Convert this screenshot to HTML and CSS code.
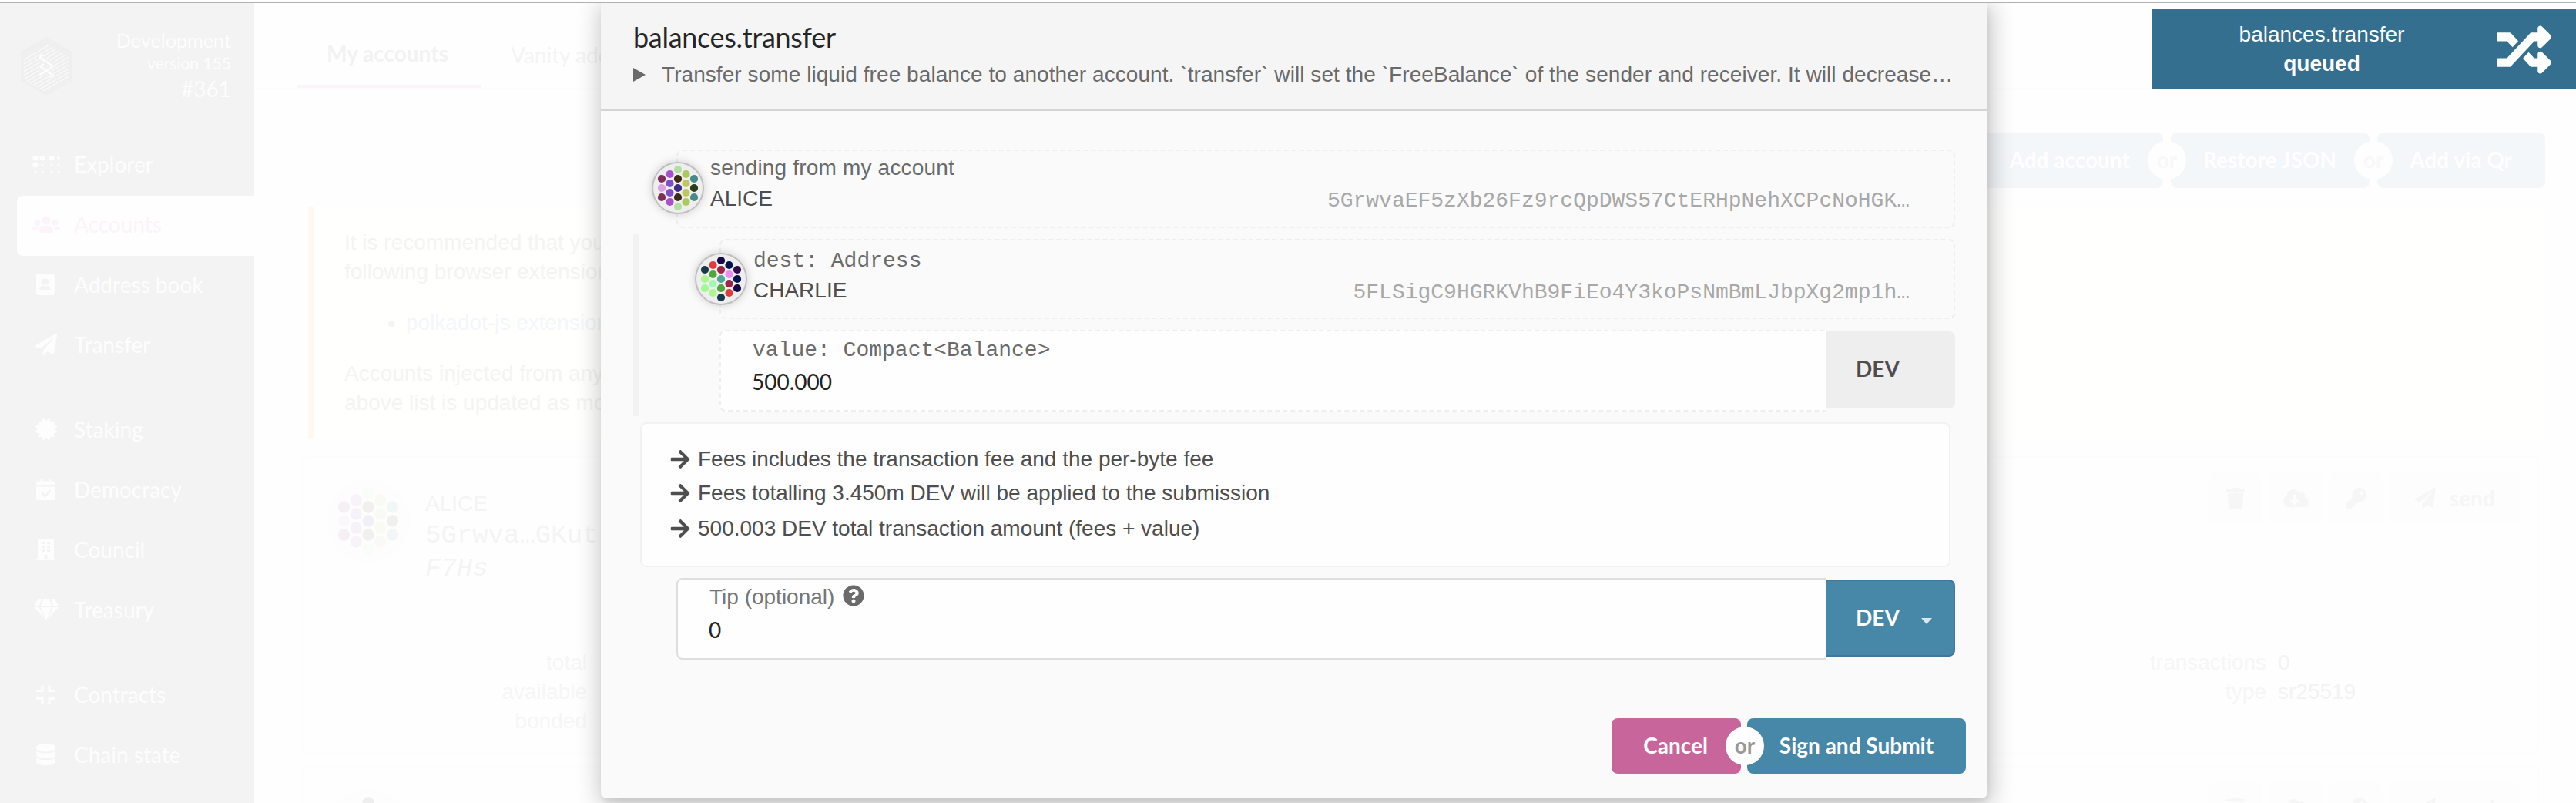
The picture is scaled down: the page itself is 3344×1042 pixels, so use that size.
FILE: index.html
```html
<!DOCTYPE html>
<html lang="en">
<head>
<meta charset="utf-8">
<title>Accounts</title>
<link rel="stylesheet" href="styles.css">
</head>
<body>
<svg class="defs" aria-hidden="true">
  <defs>
    <symbol id="plane" viewBox="0 0 512 512"><path d="M476 3.2L12.5 270.6c-18.1 10.4-15.8 35.6 2.2 43.2L121 358.4l287.3-253.2c5.5-4.9 13.3 2.6 8.6 8.3L176 407v80.5c0 23.6 28.5 32.9 42.5 15.8L282 426l124.6 52.2c14.2 6 30.4-2.9 33-18.2l72-432C515 7.8 493.3-6.8 476 3.2z"/></symbol>
    <symbol id="arrow" viewBox="0 0 448 512"><path d="M190.5 66.9l22.2-22.2c9.4-9.4 24.6-9.4 33.9 0L441 239c9.4 9.4 9.4 24.6 0 33.9L246.6 467.3c-9.4 9.4-24.6 9.4-33.9 0l-22.2-22.2c-9.5-9.5-9.3-25 .4-34.3L311.4 296H24c-13.3 0-24-10.7-24-24v-32c0-13.3 10.7-24 24-24h287.4L190.9 101.2c-9.8-9.3-10-24.8-.4-34.3z"/></symbol>
    <symbol id="trash" viewBox="0 0 448 512"><path d="M432 32H312l-9.4-18.7A24 24 0 0 0 281.1 0H166.8a23.72 23.72 0 0 0-21.4 13.3L136 32H16A16 16 0 0 0 0 48v32a16 16 0 0 0 16 16h416a16 16 0 0 0 16-16V48a16 16 0 0 0-16-16zM32 128l21.2 339a48 48 0 0 0 47.9 45h245.8a48 48 0 0 0 47.9-45L416 128z"/></symbol>
    <symbol id="cloud" viewBox="0 0 640 512"><path d="M537.6 226.6c4.1-10.7 6.4-22.4 6.4-34.6 0-53-43-96-96-96-19.7 0-38.1 6-53.3 16.2C367 64.2 315.3 32 256 32c-88.4 0-160 71.6-160 160 0 2.7.1 5.4.2 8.1C40.2 219.8 0 273.2 0 336c0 79.5 64.5 144 144 144h368c70.7 0 128-57.3 128-128 0-61.9-44-113.6-102.4-125.4zm-132.9 88.7L299.3 420.7c-6.2 6.2-16.4 6.2-22.6 0L171.3 315.3c-10.1-10.1-2.9-27.3 11.3-27.3H248V176c0-8.8 7.2-16 16-16h48c8.8 0 16 7.2 16 16v112h65.4c14.2 0 21.4 17.2 11.3 27.3z"/></symbol>
    <symbol id="key" viewBox="0 0 512 512"><path d="M512 176.001C512 273.203 433.202 352 336 352c-11.22 0-22.19-1.062-32.827-3.069l-24.012 27.014A23.999 23.999 0 0 1 261.223 384H224v40c0 13.255-10.745 24-24 24h-40v40c0 13.255-10.745 24-24 24H24c-13.255 0-24-10.745-24-24v-78.059c0-6.365 2.529-12.47 7.029-16.971l161.802-161.802C163.108 213.814 160 195.271 160 176 160 78.798 238.797.001 335.999 0 433.488-.001 512 78.511 512 176.001zM336 128c0 26.51 21.49 48 48 48s48-21.49 48-48-21.49-48-48-48-48 21.49-48 48z"/></symbol>
  </defs>
</svg>

<div class="app">
  <aside class="sidebar">
    <div class="chain">
      <svg class="chain-logo" viewBox="0 0 66 76">
        <defs><clipPath id="hex"><path d="M33 9L62 25v31L33 72 4 56V25z"/></clipPath></defs>
        <path fill="#efefef" d="M33 0l33 19v38L33 76 0 57V19z"/>
        <g clip-path="url(#hex)" stroke="#fafafa" stroke-width="1.300">
          <path d="M0 27L36 6M0 32L44 6M0 37L52 7M0 42L58 8M0 47L62 11M0 52L66 14M0 57L66 19M0 62L66 24M0 67L66 29M0 72L66 34M10 71L66 39M15 73L66 44M20 75L66 49M26 77L66 54"/>
        </g>
        <path fill="none" stroke="#f1f1f1" stroke-width="8" d="M26 27l15 11-15 10m0-10l15 11"/>
        <path fill="none" stroke="#fdfdfd" stroke-width="2.200" d="M30 24q-6 1-5 3l17 11-17 11m5-14l-5 3 17 12-5 2"/>
      </svg>
      <div class="chain-info">
        <div class="chain-name">Development</div>
        <div class="chain-version">version 155</div>
        <div class="chain-block">#361</div>
      </div>
    </div>
    <nav class="menu">
      <a class="menu-item"><span class="menu-icon"><svg width="36" height="24" viewBox="0 0 36 24"><circle cx="4" cy="4" r="3.600"/><circle cx="13" cy="4" r="3.600"/><circle cx="25" cy="4" r="3.600"/><circle cx="34" cy="4" r="1.800"/><circle cx="4" cy="13" r="3.600"/><circle cx="13" cy="13" r="1.600"/><circle cx="25" cy="13" r="1.600"/><circle cx="34" cy="13" r="1.600"/><circle cx="4" cy="22" r="1.700"/><circle cx="13" cy="22" r="1.700"/><circle cx="25" cy="22" r="1.700"/><circle cx="34" cy="22" r="1.700"/></svg></span>Explorer</a>
      <a class="menu-item active"><span class="menu-icon"><svg width="36" height="22" viewBox="0 0 36 22"><circle cx="18" cy="6" r="5.600"/><circle cx="6.500" cy="9" r="4"/><circle cx="29.500" cy="9" r="4"/><path d="M9 22v-4a5 5 0 0 1 5-5h8a5 5 0 0 1 5 5v4zM0 19v-2q0-3 3-3h6q-2 2-2 5zM36 19v-2q0-3-3-3h-6q2 2 2 5z"/></svg></span>Accounts</a>
      <a class="menu-item"><span class="menu-icon"><svg width="25" height="28" viewBox="0 0 25 28"><path fill-rule="evenodd" d="M3 0h18a2.500 2.500 0 0 1 2.500 2.500V5q1.500.5 1.500 2t-1.500 2v3q1.500.5 1.500 2t-1.500 2v3q1.500.5 1.500 2t-1.500 2v3A2.500 2.500 0 0 1 21 28H3a3 3 0 0 1-3-3V3a3 3 0 0 1 3-3zM11.500 7a4 4 0 1 0 0 7.500 4 4 0 1 0 0-7.500zM4.500 21h14q0-5.500-4-5.500l-3 1-3-1q-4 0-4 5.500z"/></svg></span>Address book</a>
      <a class="menu-item"><span class="menu-icon"><svg width="28" height="28"><use href="#plane"/></svg></span>Transfer</a>
      <a class="menu-item group"><span class="menu-icon"><svg width="28" height="28" viewBox="0 0 512 512"><path d="M458.622 255.920l45.985-45.005c13.708-12.977 7.316-36.039-10.664-40.339l-62.650-15.990 17.661-62.015c4.991-17.838-11.829-34.663-29.661-29.671l-61.994 17.667-15.984-62.671C337.085.197 313.765-6.276 300.990 7.228L256 53.570 211.011 7.229c-12.630-13.351-36.047-7.234-40.325 10.668l-15.984 62.671-61.995-17.667C74.870 57.907 58.056 74.738 63.046 92.572l17.661 62.015-62.650 15.990C.069 174.878-6.310 197.944 7.392 210.915l45.985 45.005-45.985 45.004c-13.708 12.977-7.316 36.039 10.664 40.339l62.650 15.990-17.661 62.015c-4.991 17.838 11.829 34.663 29.661 29.671l61.994-17.667 15.984 62.671c4.439 18.575 27.696 24.018 40.325 10.668L256 458.610l44.989 46.001c12.500 13.488 35.987 7.486 40.325-10.668l15.984-62.671 61.994 17.667c17.836 4.994 34.651-11.837 29.661-29.671l-17.661-62.015 62.650-15.990c17.987-4.302 24.366-27.367 10.664-40.339l-45.984-45.004z"/></svg></span>Staking</a>
      <a class="menu-item"><span class="menu-icon"><svg width="25" height="28" viewBox="0 0 25 28"><path fill-rule="evenodd" d="M0 8.500V6q0-2.500 2.500-2.500H5.500V.5h3v3h7.500v-3h3v3h3.500Q25 3.500 25 6v2.500zM0 10.500h25v15q0 2.500-2.500 2.500h-20Q0 28 0 25.500zM6 18.500l5.500 6.500 8-9-2-2-6 7-3.500-4.500z"/></svg></span>Democracy</a>
      <a class="menu-item"><span class="menu-icon"><svg width="25" height="28" viewBox="0 0 25 28"><path fill-rule="evenodd" d="M3 0h19q1 0 1 1v25h1q1 0 1 2H0q0-2 1-2h1V1q0-1 1-1zM7 4v3h4V4zm7 0v3h4V4zM7 9v3h4V9zm7 0v3h4V9zM7 14v3h4v-3zm7 0v3h4v-3zM10.500 21v5h4v-5z"/></svg></span>Council</a>
      <a class="menu-item"><span class="menu-icon"><svg width="32" height="28" viewBox="0 0 32 28"><path d="M5.500 0H10L7 9H0zM12.500 0h7l3.500 9H9zM22 0h4.500L32 9h-7zM0 11h7l7 15zM9 11h14l-7 17zM25 11h7L18 26z"/></svg></span>Treasury</a>
      <a class="menu-item group"><span class="menu-icon"><svg width="25" height="25" viewBox="0 0 25 25"><path d="M6.500 0h3v9H0V6h6.500zM15.500 0h3v6H25v3h-9.500zM0 16h9.500v9h-3v-6H0zM15.500 16H25v3h-6.500v6h-3z"/></svg></span>Contracts</a>
      <a class="menu-item"><span class="menu-icon"><svg width="25" height="28" viewBox="0 0 448 512"><path d="M448 73.143v45.714C448 159.143 347.667 192 224 192S0 159.143 0 118.857V73.143C0 32.857 100.333 0 224 0s224 32.857 224 73.143zM448 176v102.857C448 319.143 347.667 352 224 352S0 319.143 0 278.857V176c48.125 33.143 136.208 48.572 224 48.572S399.874 209.143 448 176zm0 160v102.857C448 479.143 347.667 512 224 512S0 479.143 0 438.857V336c48.125 33.143 136.208 48.572 224 48.572S399.874 369.143 448 336z"/></svg></span>Chain state</a>
    </nav>
  </aside>

  <main class="page">
    <div class="tabs">
      <span class="tab current">My accounts</span>
      <span class="tab">Vanity address</span>
    </div>
    <div class="page-actions">
      <span class="pale-button">Add account</span>
      <span class="pale-or">or</span>
      <span class="pale-button">Restore JSON</span>
      <span class="pale-or">or</span>
      <span class="pale-button">Add via Qr</span>
    </div>
    <div class="notice">
      <p>It is recommended that you<br>following browser extensions</p>
      <ul><li>polkadot-js extension</li></ul>
      <p>Accounts injected from any<br>above list is updated as more</p>
    </div>
    <div class="card">
      <div class="card-head">
        <svg class="card-avatar" viewBox="-36 -36 72 72"><circle r="36" fill="#eee" opacity=".3"/>
          <g opacity=".9"><circle cx="-21" cy="-12" r="5.100" fill="#7d2f57"/><circle cx="-21" cy="0" r="5.100" fill="#d8a3e0"/><circle cx="-21" cy="12" r="5.100" fill="#7d2f57"/><circle cx="-10.500" cy="-18" r="5.100" fill="#ab50ca"/><circle cx="-10.500" cy="-6" r="5.100" fill="#7f4dc8"/><circle cx="-10.500" cy="6" r="5.100" fill="#7f4dc8"/><circle cx="-10.500" cy="18" r="5.100" fill="#ab50ca"/><circle cy="-24" r="5.100" fill="#b2e0a1"/><circle cy="-12" r="5.100" fill="#3d2a18"/><circle r="5.100" fill="#3f2b87"/><circle cy="12" r="5.100" fill="#3d2a18"/><circle cy="24" r="5.100" fill="#b2e0a1"/><circle cx="10.500" cy="-18" r="5.100" fill="#abc95d"/><circle cx="10.500" cy="-6" r="5.100" fill="#bdc75b"/><circle cx="10.500" cy="6" r="5.100" fill="#bdc75b"/><circle cx="10.500" cy="18" r="5.100" fill="#abc95d"/><circle cx="21" cy="-12" r="5.100" fill="#478a8b"/><circle cx="21" cy="0" r="5.100" fill="#2c3c18"/><circle cx="21" cy="12" r="5.100" fill="#478a8b"/></g>
        </svg>
        <div class="card-name">
          <div>ALICE</div>
          <div class="card-address">5Grwva…GKut</div>
          <div class="card-address"><i>F7Hs</i></div>
        </div>
        <div class="card-buttons">
          <span class="tile"><svg width="24" height="27"><use href="#trash"/></svg></span>
          <span class="tile"><svg width="33" height="27"><use href="#cloud"/></svg></span>
          <span class="tile"><svg width="27" height="27"><use href="#key"/></svg></span>
          <span class="tile wide"><svg width="27" height="27"><use href="#plane"/></svg>send</span>
        </div>
      </div>
      <div class="card-data">
        <div class="balances">total<br>available<br>bonded</div>
        <div class="details"><span>transactions</span><b>0</b><span>type</span><b>sr25519</b></div>
      </div>
    </div>
    <div class="card">
      <div class="card-head">
        <svg class="card-avatar" viewBox="-36 -36 72 72"><circle r="36" fill="#eee" opacity=".3"/><circle cy="-24" r="5.100" fill="#222"/></svg>
        <div class="card-name"></div>
        <div class="card-buttons">
          <span class="tile"><svg width="24" height="27"><use href="#trash"/></svg></span>
          <span class="tile"><svg width="33" height="27"><use href="#cloud"/></svg></span>
          <span class="tile"><svg width="27" height="27"><use href="#key"/></svg></span>
          <span class="tile wide"><svg width="27" height="27"><use href="#plane"/></svg>send</span>
        </div>
      </div>
    </div>
  </main>
</div>

<section class="modal">
  <header class="modal-head">
    <h1>balances.transfer</h1>
    <div class="summary"><span class="marker"></span><span class="summary-text">Transfer some liquid free balance to another account. `transfer` will set the `FreeBalance` of the sender and receiver. It will decrease…</span></div>
  </header>
  <div class="modal-body">
    <div class="account">
      <svg class="avatar" viewBox="-34 -34 68 68"><circle cx="-21" cy="-12" r="5.100" fill="#7d2f57"/><circle cx="-21" cy="0" r="5.100" fill="#d8a3e0"/><circle cx="-21" cy="12" r="5.100" fill="#7d2f57"/><circle cx="-10.500" cy="-18" r="5.100" fill="#ab50ca"/><circle cx="-10.500" cy="-6" r="5.100" fill="#7f4dc8"/><circle cx="-10.500" cy="6" r="5.100" fill="#7f4dc8"/><circle cx="-10.500" cy="18" r="5.100" fill="#ab50ca"/><circle cy="-24" r="5.100" fill="#b2e0a1"/><circle cy="-12" r="5.100" fill="#3d2a18"/><circle r="5.100" fill="#3f2b87"/><circle cy="12" r="5.100" fill="#3d2a18"/><circle cy="24" r="5.100" fill="#b2e0a1"/><circle cx="10.500" cy="-18" r="5.100" fill="#abc95d"/><circle cx="10.500" cy="-6" r="5.100" fill="#bdc75b"/><circle cx="10.500" cy="6" r="5.100" fill="#bdc75b"/><circle cx="10.500" cy="18" r="5.100" fill="#abc95d"/><circle cx="21" cy="-12" r="5.100" fill="#478a8b"/><circle cx="21" cy="0" r="5.100" fill="#2c3c18"/><circle cx="21" cy="12" r="5.100" fill="#478a8b"/></svg>
      <div class="label sending">sending from my account</div>
      <div class="account-row"><span>ALICE</span><span class="address">5GrwvaEF5zXb26Fz9rcQpDWS57CtERHpNehXCPcNoHGK…</span></div>
    </div>
    <div class="params">
      <div class="account dest">
        <svg class="avatar" viewBox="-34 -34 68 68"><circle cx="-21" cy="-12" r="5.100" fill="#183a48"/><circle cx="-21" cy="0" r="5.100" fill="#aaf78b"/><circle cx="-21" cy="12" r="5.100" fill="#a2f892"/><circle cx="-10.500" cy="-18" r="5.100" fill="#e23b3b"/><circle cx="-10.500" cy="-6" r="5.100" fill="#4fa83b"/><circle cx="-10.500" cy="6" r="5.100" fill="#a2f7b4"/><circle cx="-10.500" cy="18" r="5.100" fill="#aaf78b"/><circle cy="-24" r="5.100" fill="#160947"/><circle cy="-12" r="5.100" fill="#9e2349"/><circle r="5.100" fill="#4fa79a"/><circle cy="12" r="5.100" fill="#4fa83b"/><circle cy="24" r="5.100" fill="#183a48"/><circle cx="10.500" cy="-18" r="5.100" fill="#02134c"/><circle cx="10.500" cy="-6" r="5.100" fill="#ea8cf2"/><circle cx="10.500" cy="6" r="5.100" fill="#9e2349"/><circle cx="10.500" cy="18" r="5.100" fill="#e23b3b"/><circle cx="21" cy="-12" r="5.100" fill="#300c48"/><circle cx="21" cy="0" r="5.100" fill="#02134c"/><circle cx="21" cy="12" r="5.100" fill="#160947"/></svg>
        <div class="label mono">dest: Address</div>
        <div class="account-row"><span>CHARLIE</span><span class="address">5FLSigC9HGRKVhB9FiEo4Y3koPsNmBmLJbpXg2mp1h…</span></div>
      </div>
      <div class="amount value">
        <div class="amount-field">
          <div class="label mono">value: Compact&lt;Balance&gt;</div>
          <div class="amount-input">500.000</div>
        </div>
        <div class="unit">DEV</div>
      </div>
    </div>
    <div class="fees">
      <div class="fee"><svg width="26" height="28"><use href="#arrow"/></svg><span>Fees includes the transaction fee and the per-byte fee</span></div>
      <div class="fee"><svg width="26" height="28"><use href="#arrow"/></svg><span>Fees totalling 3.450m DEV will be applied to the submission</span></div>
      <div class="fee last"><svg width="26" height="28"><use href="#arrow"/></svg><span>500.003 DEV total transaction amount (fees + value)</span></div>
    </div>
    <div class="amount tip">
      <div class="amount-field">
        <div class="label tip-label"><span>Tip (optional)</span><svg width="28" height="28" viewBox="0 0 512 512"><path d="M504 256c0 136.997-111.043 248-248 248S8 392.997 8 256C8 119.083 119.043 8 256 8s248 111.083 248 248zM262.655 90c-54.497 0-89.255 22.957-116.549 63.758-3.536 5.286-2.353 12.415 2.715 16.258l34.699 26.310c5.205 3.947 12.621 3.008 16.665-2.122 17.864-22.658 30.113-35.797 57.303-35.797 20.429 0 45.698 13.148 45.698 32.958 0 14.976-12.363 22.667-32.534 33.976C247.128 238.528 216 254.941 216 296v4c0 6.627 5.373 12 12 12h56c6.627 0 12-5.373 12-12v-1.333c0-28.462 83.186-29.647 83.186-106.667 0-58.002-60.165-102-116.531-102zM256 338c-25.365 0-46 20.635-46 46 0 25.364 20.635 46 46 46s46-20.636 46-46c0-25.365-20.635-46-46-46z"/></svg></div>
        <div class="amount-input">0</div>
      </div>
      <div class="unit choice">DEV<span class="caret"></span></div>
    </div>
  </div>
  <footer class="modal-foot">
    <span class="button cancel">Cancel</span>
    <span class="or">or</span>
    <span class="button submit">Sign and Submit</span>
  </footer>
</section>

<aside class="toast">
  <div class="toast-text">balances.transfer<br><b>queued</b></div>
  <svg class="toast-icon" viewBox="0 0 512 512"><path d="M504.971 359.029c9.373 9.373 9.373 24.569 0 33.941l-80 79.984c-15.010 15.010-40.971 4.490-40.971-16.971V416h-58.785a12.004 12.004 0 0 1-8.773-3.812l-70.556-75.596 53.333-57.143L352 336h32v-39.981c0-21.438 25.943-31.998 40.971-16.971l80 79.981zM12 176h84l52.781 56.551 53.333-57.143-70.556-75.596A11.999 11.999 0 0 0 122.785 96H12c-6.627 0-12 5.373-12 12v56c0 6.627 5.373 12 12 12zm372 0v39.984c0 21.460 25.961 31.980 40.971 16.971l80-79.984c9.373-9.373 9.373-24.569 0-33.941l-80-79.981C409.943 24.021 384 34.582 384 56.019V96h-58.785a12.004 12.004 0 0 0-8.773 3.812L96 336H12c-6.627 0-12 5.373-12 12v56c0 6.627 5.373 12 12 12h110.785c3.326 0 6.503-1.381 8.773-3.812L352 176h32z"/></svg>
</aside>
</body>
</html>
```
FILE: styles.css
```css
* { box-sizing: border-box; }
html, body { margin: 0; height: 1042px; overflow: hidden; }
body {
  position: relative;
  width: 3344px;
  background: #fefefe;
  font: 28px/40px "Liberation Sans", Arial, sans-serif;
  color: #4e4e4e;
}
svg { fill: currentColor; display: block; flex: none; overflow: visible; }
.defs { position: absolute; width: 0; height: 0; }

.app { display: flex; height: 1042px; padding-top: 3px; }
.sidebar, .page { border-top: 1px solid #b0b0b0; height: 1039px; }

/* Sidebar */
.sidebar {
  flex: none;
  width: 330px;
  background: #f3f3f3;
  color: #fdfdfd;
  font-family: Lato, sans-serif;
}
.chain { display: flex; justify-content: space-between; height: 172px; padding: 29px 30px 0 27px; }
.chain-logo { width: 66px; height: 76px; margin-top: 15px; }
.chain-info { text-align: right; line-height: 36px; }
.chain-name { font-size: 25.2px; padding-top: 1px; height: 36px; }
.chain-version { font-size: 21px; line-height: 26px; margin: 0 0 2px; }
.menu-item { display: flex; align-items: center; height: 78px; padding: 0 0 4px 42px; }
.menu-item.group { margin-top: 32px; }
.menu-icon { display: flex; justify-content: center; width: 35px; margin-right: 19px; }
.menu-item.active {
  margin-left: 22px;
  padding-left: 20px;
  background: #fefefe;
  border-radius: 8px 0 0 8px;
  color: #fbf4f9;
}

/* Page behind the dialog */
.page { flex: 1; overflow: hidden; color: #f4f4f4; }
.tabs {
  display: flex;
  height: 111px;
  padding-left: 56px;
  border-bottom: 1px solid #fcfcfc;
  font-family: Lato, sans-serif;
  white-space: nowrap;
}
.tab { width: 238px; padding: 47px 0 0 38px; margin-right: 1px; }
.tab.current { font-weight: 700; padding-top: 45px; border-bottom: 4px solid #fbf5fa; color: #f2f2f2; }
.page-actions {
  display: flex;
  align-items: center;
  justify-content: flex-end;
  padding: 57px 40px 0 0;
  font: 700 28px/70px Lato, sans-serif;
}
.pale-button { height: 72px; background: #f3f7fa; color: #fefefe; border-radius: 8px; padding: 0 43px 0 42px; }
.pale-or {
  width: 50px; height: 50px; margin: 0 -20px; z-index: 1;
  border-radius: 50%; background: #fefefe; color: #f8f8f8;
  line-height: 48px; text-align: center;
}
.notice {
  height: 302px;
  margin: 24px 40px 0 70px;
  padding: 28px 0 0 39px;
  border-left: 8px solid #fff8f1;
  background: #fffffd;
  line-height: 38px;
}
.notice p { margin: 0; }
.notice ul { margin: 28px 0; padding-left: 80px; }
.notice li { color: #f3f6fa; }
.notice li::marker { color: #f4f4f4; }
.card {
  height: 386px;
  margin: 22px 48px 0 62px;
  border: 1px solid #fcfcfc;
  border-radius: 8px;
}
.card + .card { margin-top: 16px; }
.card-head { display: flex; height: 240px; padding: 20px 22px 0 31px; }
.card-avatar { width: 108px; height: 108px; opacity: .065; margin-top: 9px; }
.card-name { flex: 1; padding: 21px 0 0 20px; }
.card-address { font: 34px/44px "Liberation Mono", monospace; margin-top: -1px; }
.card-buttons { display: flex; gap: 8px; }
.tile {
  display: flex; align-items: center; justify-content: center;
  width: 70px; height: 66px;
  background: #fdfdfd; border-radius: 8px; color: #f6f6f6;
}
.tile.wide { width: 172px; gap: 18px; font: 700 28px/40px Lato, sans-serif; }
.card-data { display: flex; justify-content: space-between; padding-top: 8px; line-height: 38px; color: #f6f6f6; }
.balances { width: 369px; text-align: right; }
.details { display: grid; grid-template-columns: auto 338px; column-gap: 15px; align-content: start; text-align: right; }
.details b { text-align: left; font-weight: 400; color: #f3f3f3; }

/* Dialog */
.modal {
  position: absolute;
  left: 780px; top: 4px;
  width: 1800px; height: 1032px;
  background: #fafafa;
  border-radius: 0 0 8px 8px;
  box-shadow: 2px 6px 6px rgba(0,0,0,.05), 2px 6px 30px 4px rgba(0,0,0,.22);
  clip-path: inset(0 -60px -60px -60px);
}
.modal-head { height: 140px; padding: 18px 42px 0; background: #f5f5f5; border-bottom: 2px solid #d4d4d4; }
.modal-head h1 { margin: 0; font: 400 36px/52px Lato, sans-serif; letter-spacing: -.3px; color: #252525; }
.summary { display: flex; align-items: center; margin-top: 3px; color: #6a6a6a; white-space: nowrap; }
.summary-text { letter-spacing: .065px; }
.marker { border: solid transparent; border-width: 9px 0 9px 16px; border-left-color: #6a6a6a; margin-right: 21px; }
.modal-body { height: 788px; padding: 50px 42px 0; }
.account {
  position: relative;
  height: 102px;
  margin-left: 56px;
  padding: 2px 57px 0 42px;
  border: 2px dashed #eee;
  border-radius: 8px;
}
.avatar {
  position: absolute;
  left: -34px; top: 14px;
  width: 68px; height: 68px;
  border-radius: 50%;
  background: #eee;
  box-shadow: inset 0 0 0 2px #bfbfbf, 0 0 12px rgba(0,0,0,.18);
}
.label { color: #6a6a6a; }
.sending { letter-spacing: .18px; }
.mono, .address { font-family: "Liberation Mono", monospace; }
.account-row { display: flex; justify-content: space-between; }
.address { color: #a8a8a8; position: relative; top: 3px; }
.params { margin-top: 8px; height: 236px; padding: 6px 0 0 104px; border-left: 8px solid #f2f2f2; }
.dest { margin-left: 0; height: 104px; padding-top: 7px; }
.dest .avatar { top: 16px; }
.dest .account-row { margin-top: -2px; }
.amount { display: flex; }
.value { margin-top: 14px; }
.amount-field { flex: 1; height: 106px; padding: 5px 0 0 41px; background: #fefefe; border: 2px dashed #eee; border-right: 0; border-radius: 8px 0 0 8px; }
.amount-input { font-family: Lato, sans-serif; color: #222; margin-left: -1px; }
.unit {
  width: 168px; height: 100px; margin-top: 2px; padding-left: 39px;
  background: #eee; border-radius: 0 8px 8px 0;
  font: 700 28px/97px Lato, sans-serif;
}
.fees { height: 188px; margin: 8px 6px 0 9px; padding: 24px 0 0 37px; background: #fefefe; border: 2px solid #f2f2f2; border-radius: 8px; }
.fee { display: flex; align-items: center; gap: 10px; height: 44px; white-space: nowrap; }
.fee.last { margin-top: 2px; }
.tip { margin: 14px 0 0 56px; }
.tip .amount-field { border: 2px solid #dedede; border-right: 0; padding-top: 3px; }
.tip .label { display: flex; align-items: center; color: #767676; }
.tip-label svg { color: #6a6a6a; margin: -4px 0 0 11px; }
.tip .amount-input { margin-top: 2px; }
.choice { display: flex; align-items: center; background: #4787a8; color: #fff; border: 2px solid #40779a; border-left: 0; line-height: 92px; padding-bottom: 2px; }
.caret { border: solid transparent; border-width: 8px 7px 0; border-top-color: #d9e7ee; margin: 10px 0 0 28px; }
.modal-foot { display: flex; align-items: center; justify-content: flex-end; padding-right: 28px; font: 700 28px/70px Lato, sans-serif; }
.button { height: 72px; border-radius: 8px; color: #fff; text-align: center; }
.cancel { width: 168px; background: #c8669b; padding-right: 2px; }
.submit { width: 284px; background: #4787a8; }
.or { width: 50px; height: 50px; margin: 0 -22px 0 -20px; z-index: 1; border-radius: 50%; background: #fff; color: #999; line-height: 48px; text-align: center; }

/* Notification */
.toast {
  position: absolute;
  right: 0; top: 12px;
  display: flex; align-items: center;
  width: 550px; height: 104px;
  padding-left: 20px;
  background: #356f8f; color: #fff;
  text-align: center; line-height: 38px;
}
.toast-text { width: 400px; }
.toast-icon { width: 71px; height: 71px; margin-left: 27px; }
```
